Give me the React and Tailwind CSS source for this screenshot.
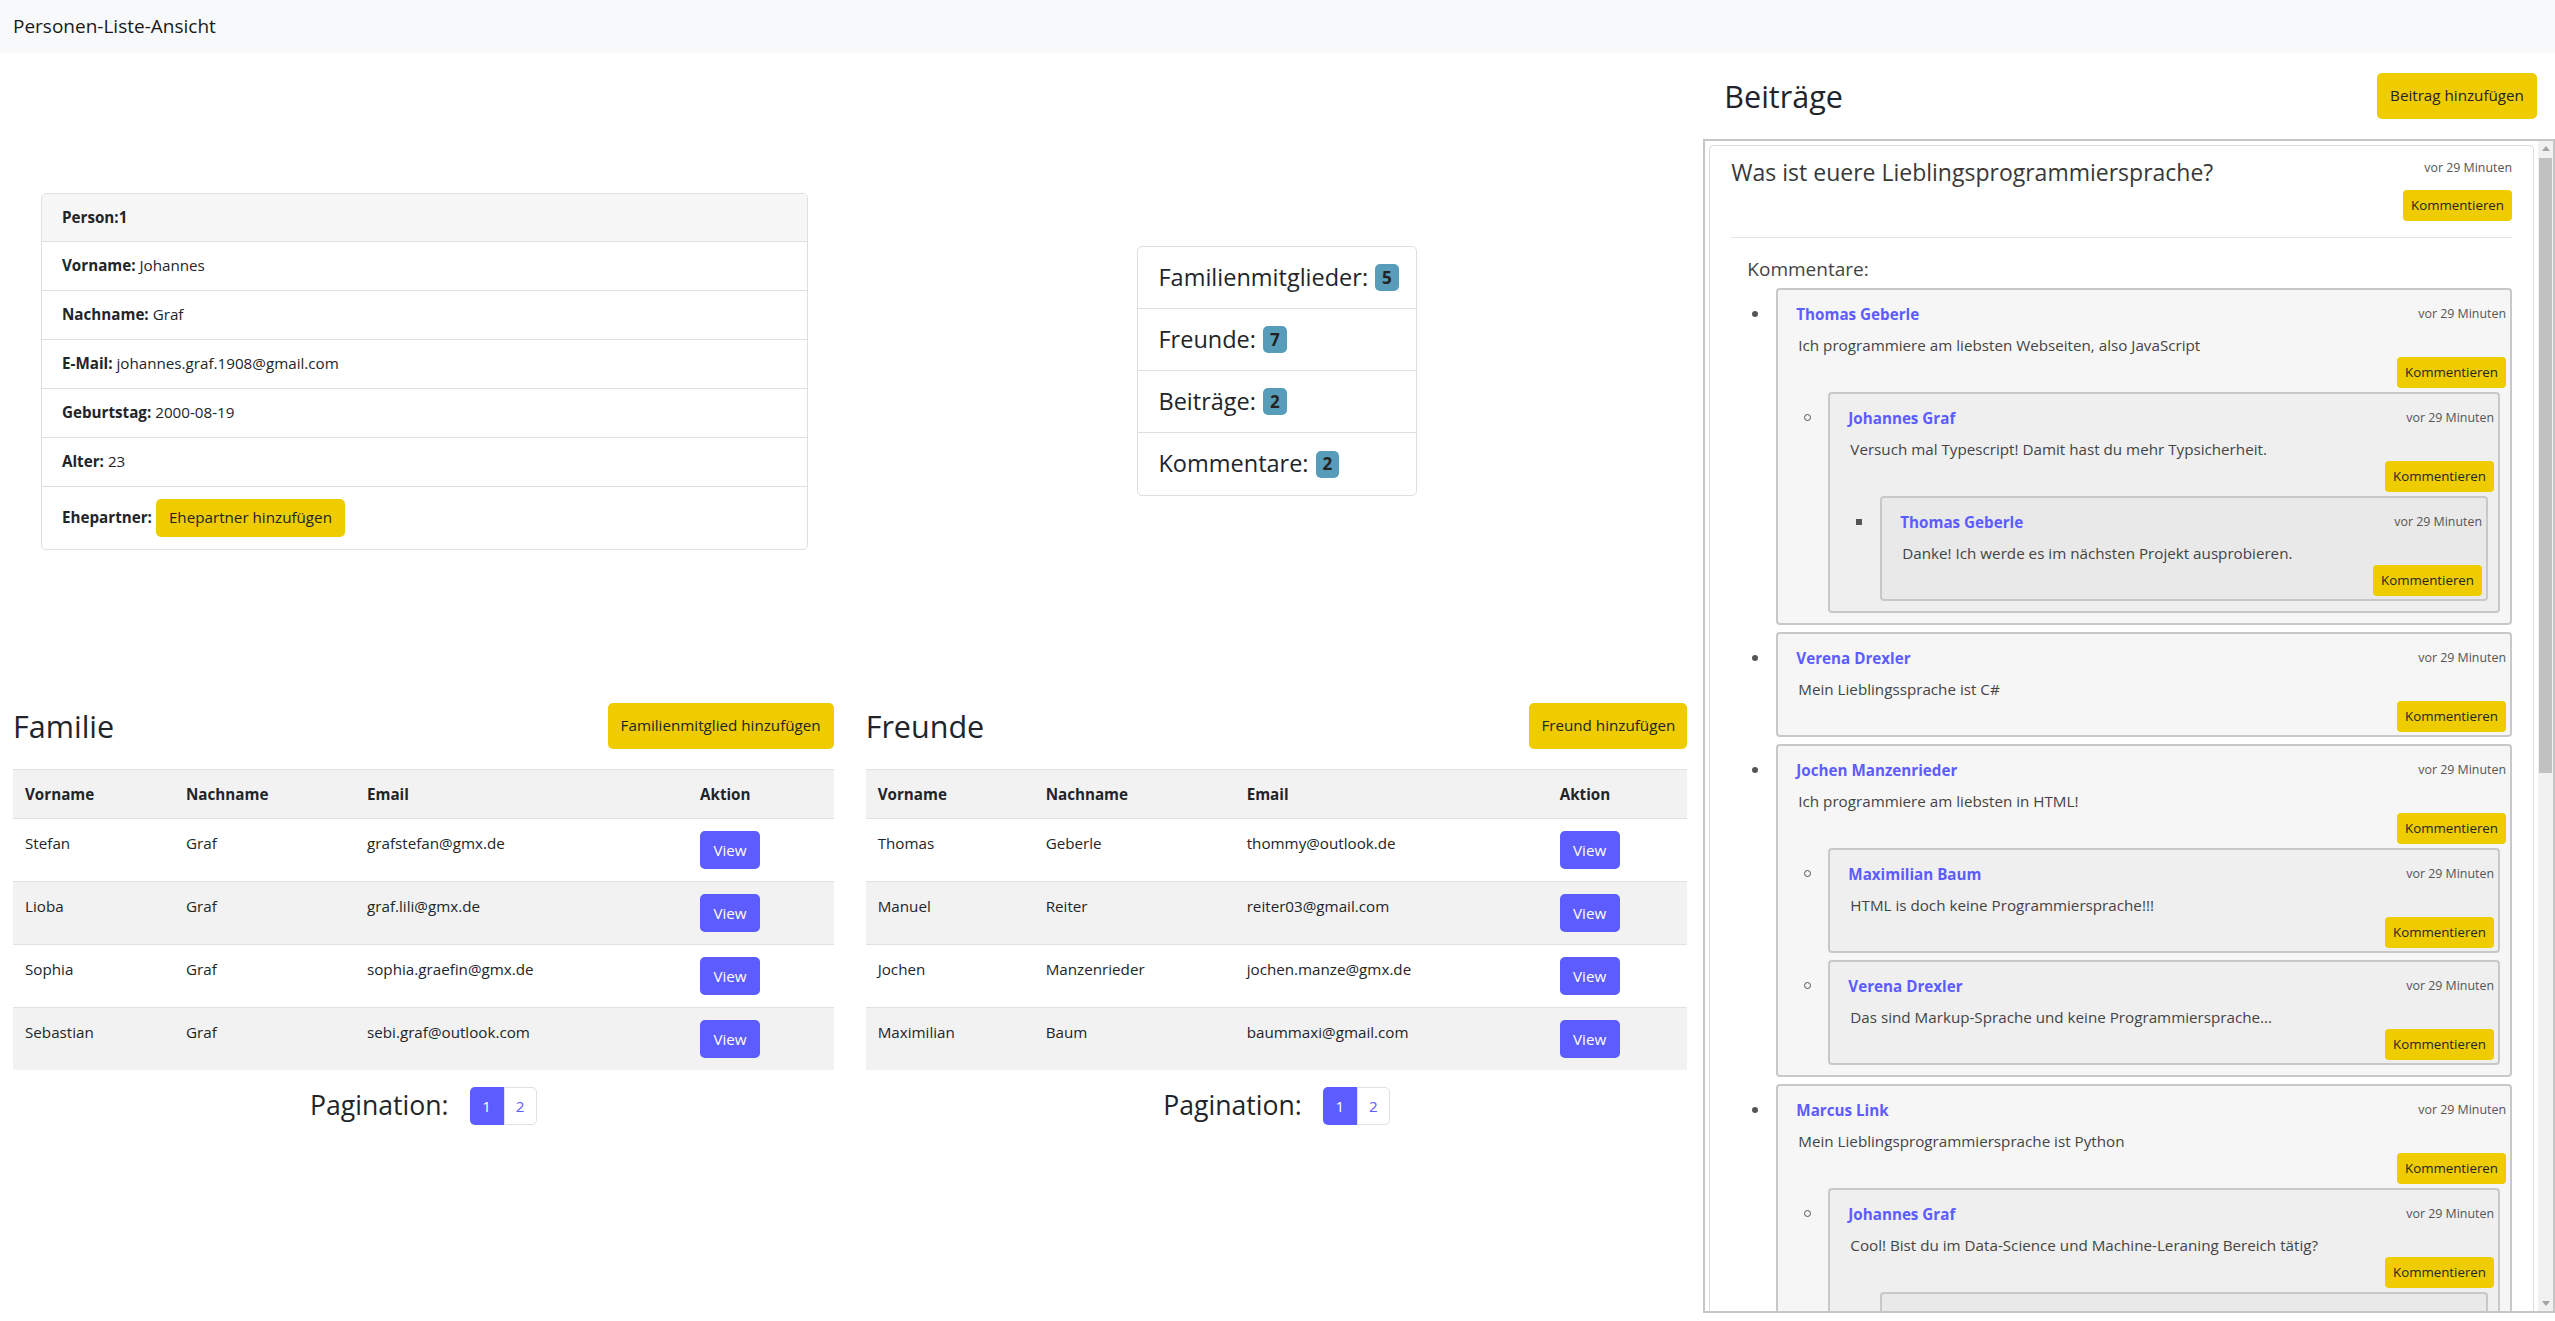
import React from "react";

const family = [
  ["Stefan", "Graf", "grafstefan@gmx.de"],
  ["Lioba", "Graf", "graf.lili@gmx.de"],
  ["Sophia", "Graf", "sophia.graefin@gmx.de"],
  ["Sebastian", "Graf", "sebi.graf@outlook.com"],
];
const friends = [
  ["Thomas", "Geberle", "thommy@outlook.de"],
  ["Manuel", "Reiter", "reiter03@gmail.com"],
  ["Jochen", "Manzenrieder", "jochen.manze@gmx.de"],
  ["Maximilian", "Baum", "baummaxi@gmail.com"],
];

const post1 = [
  {
    name: "Thomas Geberle",
    text: "Ich programmiere am liebsten Webseiten, also JavaScript",
    children: [
      {
        name: "Johannes Graf",
        text: "Versuch mal Typescript! Damit hast du mehr Typsicherheit.",
        children: [{ name: "Thomas Geberle", text: "Danke! Ich werde es im nächsten Projekt ausprobieren." }],
      },
    ],
  },
  { name: "Verena Drexler", text: "Mein Lieblingssprache ist C#" },
  {
    name: "Jochen Manzenrieder",
    text: "Ich programmiere am liebsten in HTML!",
    children: [
      { name: "Maximilian Baum", text: "HTML is doch keine Programmiersprache!!!" },
      { name: "Verena Drexler", text: "Das sind Markup-Sprache und keine Programmiersprache..." },
    ],
  },
  {
    name: "Marcus Link",
    text: "Mein Lieblingsprogrammiersprache ist Python",
    children: [
      {
        name: "Johannes Graf",
        text: "Cool! Bist du im Data-Science und Machine-Leraning Bereich tätig?",
        children: [{ name: "", text: "", empty: true }],
      },
    ],
  },
];

function YellowBtn({ children, className = "" }) {
  return (
    <button
      className={
        "bg-[#eecc00] text-[#212529] rounded-[5px] whitespace-nowrap leading-none flex items-center justify-center " +
        className
      }
    >
      {children}
    </button>
  );
}

function SmallBtn() {
  return (
    <button className="h-[31px] px-[8px] text-[13.3px] bg-[#eecc00] text-[#212529] rounded-[4px] leading-none">
      Kommentieren
    </button>
  );
}

function Bullet({ level }) {
  if (level === 0) return <span className="block mt-[23px] w-[6px] h-[6px] rounded-full bg-[#555]" />;
  if (level === 1)
    return <span className="block mt-[22px] w-[7px] h-[7px] rounded-full border-[1.5px] border-[#555]" />;
  return <span className="block mt-[23px] w-[6px] h-[6px] bg-[#555]" />;
}

function Comment({ c, level }) {
  const bg = level === 0 ? "bg-[#f6f6f6]" : level === 1 ? "bg-[#efefef]" : "bg-[#e9e9e9]";
  return (
    <li className="flex mb-[7px]">
      <div className="w-[24px] shrink-0">
        <Bullet level={level} />
      </div>
      <div
        className={
          "flex-1 min-w-0 border-2 border-[#c8c8c8] rounded-[4px] pl-[18px] pr-[4px] pt-[12px] pb-[3px] " +
          bg +
          (c.empty ? " h-[105px]" : "")
        }
      >
        {!c.empty && (
          <>
            <div className="flex justify-between items-center h-[24px]">
              <span className="font-bold text-[15.2px] text-[#5c5cff]">{c.name}</span>
              <span className="text-[12.4px] text-[#555]">vor 29 Minuten</span>
            </div>
            <p className="mt-[7px] pl-[2px] leading-[24px] text-[15.2px] text-[#444]">{c.text}</p>
            <div className="flex justify-end">
              <SmallBtn />
            </div>
          </>
        )}
        {c.children && (
          <ul className="mt-[4px] pl-[8px] pr-[6px]">
            {c.children.map((ch, i) => (
              <Comment key={i} c={ch} level={level + 1} />
            ))}
          </ul>
        )}
      </div>
    </li>
  );
}

function Post({ title, comments, time }) {
  return (
    <div className="border border-[#dcdcdc] rounded-[4px] bg-white px-[21px] pt-[12px] pb-[10px] mb-[12px]">
      <div className="flex justify-between items-start">
        <h4 className="text-[23px] leading-[28px] font-medium text-[#383838]">{title}</h4>
        <div className="flex flex-col items-end">
          <span className="text-[12.4px] leading-[20px] text-[#555]">{time}</span>
          <div className="mt-[12px]">
            <SmallBtn />
          </div>
        </div>
      </div>
      <div className="mt-[16px] border-t border-[#e3e3e3]" />
      <div className="mt-[16px] ml-[16px] text-[19px] leading-[30px] text-[#444]">Kommentare:</div>
      <ul className="mt-[4px] pl-[21px]">
        {comments.map((c, i) => (
          <Comment key={i} c={c} level={0} />
        ))}
      </ul>
    </div>
  );
}

function Scrollbar() {
  return (
    <div className="w-[15px] shrink-0 bg-[#f1f1f1] flex flex-col">
      <div className="h-[15px] flex items-center justify-center">
        <svg width="8" height="5" viewBox="0 0 8 5">
          <polygon points="0,5 4,0 8,5" fill="#a3a3a3" />
        </svg>
      </div>
      <div className="flex-1 flex flex-col px-[1px] pt-[2px]">
        <div className="h-[615px] bg-[#c1c1c1]" />
      </div>
      <div className="h-[15px] flex items-center justify-center">
        <svg width="8" height="5" viewBox="0 0 8 5">
          <polygon points="0,0 8,0 4,5" fill="#a3a3a3" />
        </svg>
      </div>
    </div>
  );
}

function PeopleTable({ title, btnLabel, btnW, cols, rows, pad }) {
  return (
    <div className={"pt-[14px] " + pad}>
      <div className="flex justify-between items-center h-[46px]">
        <h2 className="text-[30.5px] font-medium text-[#212529] leading-none">{title}</h2>
        <YellowBtn className={"h-[46px] text-[15.2px] " + btnW}>{btnLabel}</YellowBtn>
      </div>
      <div className="mt-[20px] text-[15.2px] text-[#212529]">
        <div className={"grid h-[49px] items-center border-t border-[#dee2e6] bg-[#f2f2f2] font-bold " + cols}>
          <div className="px-[12px]">Vorname</div>
          <div className="px-[12px]">Nachname</div>
          <div className="px-[12px]">Email</div>
          <div className="px-[12px]">Aktion</div>
        </div>
        {rows.map((r, i) => (
          <div
            key={i}
            className={
              "grid h-[63px] border-t border-[#dee2e6] " + cols + (i % 2 === 1 ? " bg-[#f2f2f2]" : " bg-white")
            }
          >
            <div className="px-[12px] pt-[12px] leading-[24px]">{r[0]}</div>
            <div className="px-[12px] pt-[12px] leading-[24px]">{r[1]}</div>
            <div className="px-[12px] pt-[12px] leading-[24px]">{r[2]}</div>
            <div className="px-[12px] pt-[12px]">
              <button className="w-[60px] h-[38px] rounded-[5px] bg-[#5c5cff] text-white text-[15.2px]">View</button>
            </div>
          </div>
        ))}
      </div>
      <div className="mt-[16px] flex justify-center items-center gap-[21px]">
        <span className="text-[26.6px] font-medium text-[#212529]">Pagination:</span>
        <div className="flex text-[15.2px]">
          <span className="w-[34px] h-[38px] flex items-center justify-center bg-[#5c5cff] text-white rounded-l-[5px]">
            1
          </span>
          <span className="w-[33px] h-[38px] flex items-center justify-center bg-white text-[#5c5cff] border border-[#dee2e6] rounded-r-[5px]">
            2
          </span>
        </div>
      </div>
    </div>
  );
}

function Row({ label, value, children, h = "h-[49px]", last }) {
  return (
    <div className={"flex items-center px-[20px] text-[15.2px] " + h + (last ? "" : " border-b border-[#dfdfdf]")}>
      <span className="font-bold">{label}</span>
      {value && <span>&nbsp;{value}</span>}
      {children}
    </div>
  );
}

function Stat({ label, n, last }) {
  return (
    <div className={"h-[62px] flex items-center px-[20px]" + (last ? "" : " border-b border-[#dfdfdf]")}>
      <span className="text-[23.5px] font-medium text-[#212529]">{label}</span>
      <span className="ml-[7px] h-[27px] px-[7px] rounded-[5px] bg-[#579dba] text-[#222] font-bold text-[17px] flex items-center">
        {n}
      </span>
    </div>
  );
}

export default function App() {
  return (
    <div className="w-full h-[1321px] overflow-hidden bg-white font-['Open_Sans',_'Noto_Sans',_sans-serif] text-[#212529]">
      <div className="h-[53px] bg-[#f8f9fa] flex items-center px-[13px] text-[19px] text-[#1a1a1a]">
        Personen-Liste-Ansicht
      </div>
      <div className="grid grid-cols-3">
        <div className="col-span-2 flex flex-col">
          <div className="h-[636px] grid grid-cols-2 items-center">
            <div className="ml-[41px] w-[767px] border border-[#dfdfdf] rounded-[5px] overflow-hidden">
              <div className="h-[48px] bg-[#f7f7f7] border-b border-[#dfdfdf] flex items-center px-[20px] font-bold text-[15.2px]">
                Person:1
              </div>
              <Row label="Vorname:" value="Johannes" />
              <Row label="Nachname:" value="Graf" />
              <Row label="E-Mail:" value="johannes.graf.1908@gmail.com" />
              <Row label="Geburtstag:" value="2000-08-19" />
              <Row label="Alter:" value="23" />
              <Row label="Ehepartner:" h="h-[62px]" last>
                <YellowBtn className="ml-[4px] h-[38px] px-[13px] text-[15.2px]">Ehepartner hinzufügen</YellowBtn>
              </Row>
            </div>
            <div className="justify-self-center w-[280px] border border-[#dfdfdf] rounded-[5px]">
              <Stat label="Familienmitglieder:" n="5" />
              <Stat label="Freunde:" n="7" />
              <Stat label="Beiträge:" n="2" />
              <Stat label="Kommentare:" n="2" last />
            </div>
          </div>
          <div className="grid grid-cols-2">
            <PeopleTable
              title="Familie"
              btnLabel="Familienmitglied hinzufügen"
              btnW="w-[226px]"
              cols="grid-cols-[161px_181px_333px_1fr]"
              rows={family}
              pad="pl-[13px] pr-[18px]"
            />
            <PeopleTable
              title="Freunde"
              btnLabel="Freund hinzufügen"
              btnW="w-[158px]"
              cols="grid-cols-[168px_201px_313px_1fr]"
              rows={friends}
              pad="pl-[14px] pr-[16px]"
            />
          </div>
        </div>
        <div className="col-span-1 pt-[20px]">
          <div className="flex justify-between items-center h-[46px] pl-[21px] pr-[18px]">
            <h2 className="text-[30.5px] font-medium text-[#212529] leading-none">Beiträge</h2>
            <YellowBtn className="h-[46px] w-[160px] text-[15.2px]">Beitrag hinzufügen</YellowBtn>
          </div>
          <div className="mt-[20px] h-[1174px] border-2 border-[#c6c6c6] flex">
            <div className="flex-1 min-w-0 overflow-hidden p-[4px]">
              <Post title="Was ist euere Lieblingsprogrammiersprache?" comments={post1} time="vor 29 Minuten" />
            </div>
            <Scrollbar />
          </div>
        </div>
      </div>
    </div>
  );
}
